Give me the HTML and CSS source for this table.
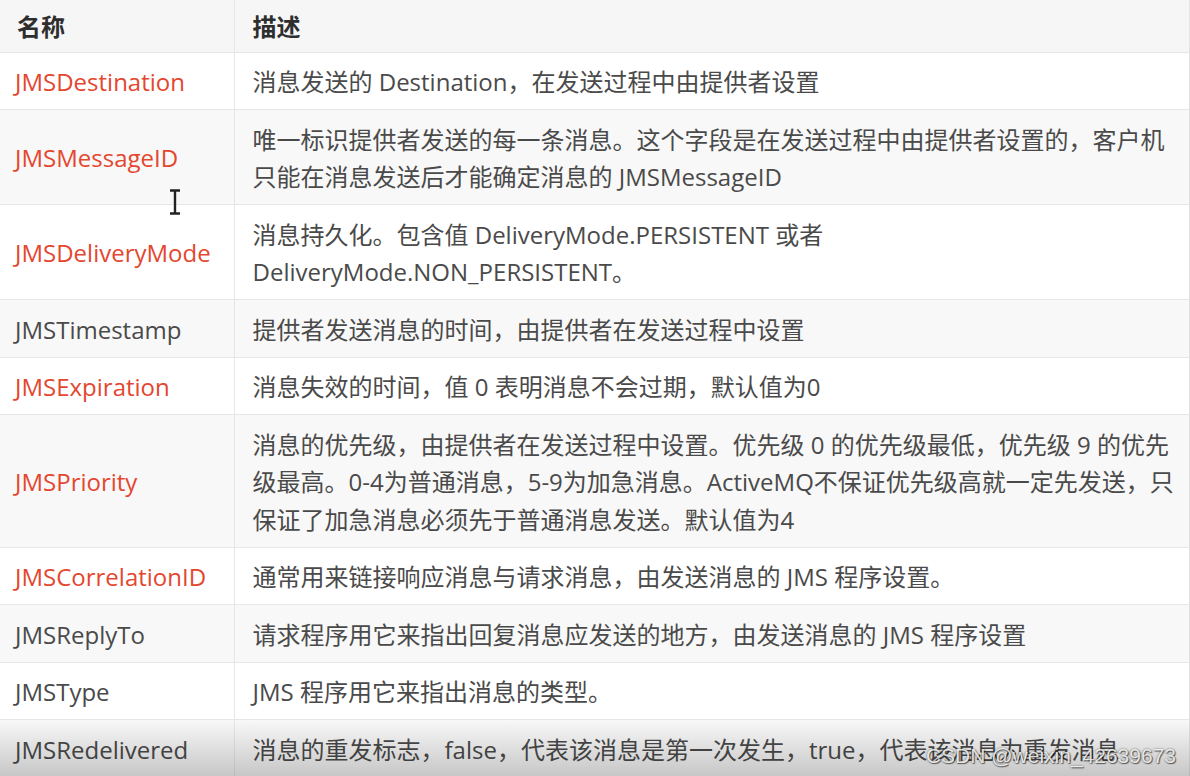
FILE: index.html
```html
<!DOCTYPE html>
<html lang="zh-CN">
<head>
  <meta charset="UTF-8" />
  <title>JMS 消息头</title>
  <link rel="stylesheet" href="styles.css">
</head>
<body>
  <div class="frame">
    <table class="headers">
      <thead>
        <tr>
          <th class="name">名称</th>
          <th>描述</th>
        </tr>
      </thead>
      <tbody>
        <tr>
          <td class="name red">JMSDestination</td>
          <td>消息发送的 Destination，在发送过程中由提供者设置</td>
        </tr>
        <tr>
          <td class="name red">JMSMessageID</td>
          <td>唯一标识提供者发送的每一条消息。这个字段是在发送过程中由提供者设置的，客户机只能在消息发送后才能确定消息的 JMSMessageID</td>
        </tr>
        <tr>
          <td class="name red">JMSDeliveryMode</td>
          <td>消息持久化。包含值 DeliveryMode.PERSISTENT 或者 DeliveryMode.NON_PERSISTENT。</td>
        </tr>
        <tr>
          <td class="name">JMSTimestamp</td>
          <td>提供者发送消息的时间，由提供者在发送过程中设置</td>
        </tr>
        <tr>
          <td class="name red">JMSExpiration</td>
          <td>消息失效的时间，值 0 表明消息不会过期，默认值为0</td>
        </tr>
        <tr>
          <td class="name red">JMSPriority</td>
          <td>消息的优先级，由提供者在发送过程中设置。优先级 0 的优先级最低，优先级 9 的优先级最高。0-4为普通消息，5-9为加急消息。ActiveMQ不保证优先级高就一定先发送，只保证了加急消息必须先于普通消息发送。默认值为4</td>
        </tr>
        <tr>
          <td class="name red">JMSCorrelationID</td>
          <td>通常用来链接响应消息与请求消息，由发送消息的 JMS 程序设置。</td>
        </tr>
        <tr>
          <td class="name">JMSReplyTo</td>
          <td>请求程序用它来指出回复消息应发送的地方，由发送消息的 JMS 程序设置</td>
        </tr>
        <tr>
          <td class="name">JMSType</td>
          <td>JMS 程序用它来指出消息的类型。</td>
        </tr>
        <tr>
          <td class="name">JMSRedelivered</td>
          <td>消息的重发标志，false，代表该消息是第一次发生，true，代表该消息为重发消息</td>
        </tr>
      </tbody>
    </table>

    <!-- text cursor -->
    <svg class="cursor" width="14" height="26" viewBox="0 0 14 26">
      <path d="M2 1.5h10M7 1.5v23M2 24.5h10" stroke="#222" stroke-width="2.4" fill="none"/>
    </svg>

    <div class="shade"></div>
    <div class="watermark">CSDN @weixin_42639673</div>
  </div>
</body>
</html>
```

FILE: styles.css
```css
* {
  margin: 0;
  padding: 0;
  box-sizing: border-box;
}
html, body {
  width: 100%;
  height: 100%;
  overflow: hidden;
  background: #fff;
}
.frame {
  position: relative;
  width: 1190px;
  height: 776px;
  overflow: hidden;
}
.headers {
  width: 1190px;
  border-collapse: collapse;
  table-layout: fixed;
  font-family: 'Open Sans', 'Noto Sans CJK SC', sans-serif;
  font-size: 24px;
  line-height: 37.5px;
  color: #4a4a4a;
  border-right: 1px solid #e2e2e2;
}
.headers th,
.headers td {
  text-align: left;
  vertical-align: middle;
  padding: 10.5px 10px 8.5px 18px;
  border-bottom: 1px solid #e6e6e6;
}
.headers th {
  padding-top: 8px;
  padding-bottom: 6px;
  font-weight: 700;
  color: #2e2e2e;
  background: #f6f6f6;
}
.headers .name {
  width: 234px;
  padding-left: 15px;
  border-right: 1px solid #e6e6e6;
}
.headers th.name {
  padding-left: 17px;
}
.headers tbody tr:nth-child(even) {
  background: #f8f8f8;
}
.red {
  color: #e4472f;
}
.cursor {
  position: absolute;
  left: 168px;
  top: 189px;
}
.shade {
  position: absolute;
  left: 0;
  right: 0;
  bottom: 0;
  height: 56px;
  background: linear-gradient(to bottom, rgba(0, 0, 0, 0), rgba(0, 0, 0, 0.2));
}
.watermark {
  position: absolute;
  right: 14px;
  bottom: 8px;
  font-family: 'Liberation Sans', sans-serif;
  font-size: 21px;
  color: rgba(255, 255, 255, 0.85);
  text-shadow: 0 0 2px rgba(0, 0, 0, 0.6), 1px 1px 1px rgba(0, 0, 0, 0.5);
}
```
